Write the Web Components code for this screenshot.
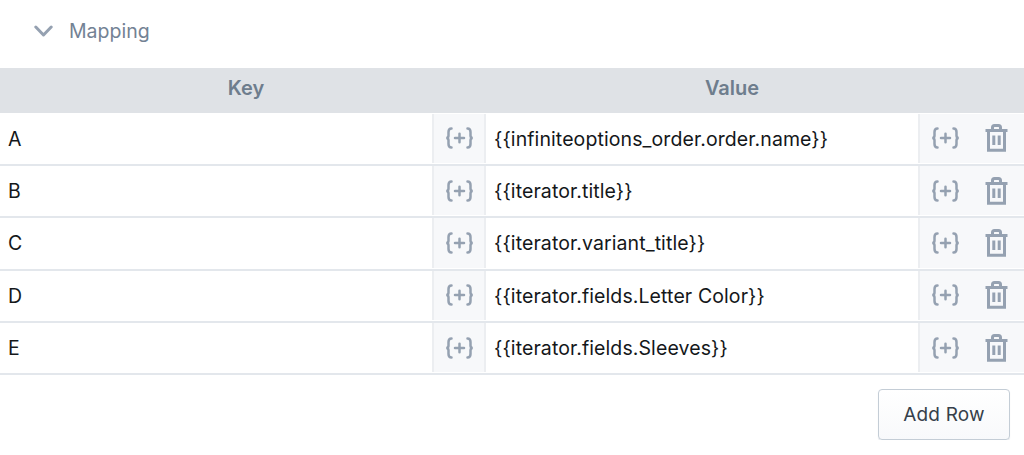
<!DOCTYPE html>
<html><head><meta charset="utf-8"><style>
html,body{margin:0;padding:0;background:#fff;font-family:Inter,"Liberation Sans",sans-serif}
</style></head><body>
<template id="t-row"><style>
:host{display:grid;grid-template-columns:432px 54px 432px 106px;height:52.4px;box-sizing:border-box;border-bottom:2px solid #e3e7ec;font-size:19.5px;color:#14171a;letter-spacing:.1px}
.cell{display:flex;align-items:center;padding-left:8px}
.add{display:flex;align-items:center;justify-content:center;background:#f7f8fa;border-left:2px solid #eceef1;border-right:2px solid #eceef1;margin-bottom:1px}
.acts{display:flex;align-items:center;background:#f7f8fa;border-left:2px solid #eceef1;padding-left:11px;gap:25px;margin-bottom:1px}
svg{display:block}
</style>
<div class="cell"><slot name="k"></slot></div>
<div class="add"><svg width="29" height="24" viewBox="0 0 29 22" fill="none" stroke="#95a1b1" stroke-width="2.500" stroke-linecap="round"><path d="M6.500 1.500C3.800 1.500 3.500 3 3.500 5v3.500C3.500 10 2.500 11 1.200 11c1.300 0 2.300 1 2.300 2.500V17c0 2 .3 3.500 3 3.500M22.500 1.500c2.700 0 3 1.500 3 3.500v3.500c0 1.500 1 2.500 2.300 2.500-1.300 0-2.300 1-2.300 2.500V17c0 2-.3 3.500-3 3.500M10 11h9M14.500 6.800v8.400"/></svg></div>
<div class="cell"><slot name="v"></slot></div>
<div class="acts"><svg width="29" height="24" viewBox="0 0 29 22" fill="none" stroke="#95a1b1" stroke-width="2.500" stroke-linecap="round"><path d="M6.500 1.500C3.800 1.500 3.500 3 3.500 5v3.500C3.500 10 2.500 11 1.200 11c1.300 0 2.300 1 2.300 2.500V17c0 2 .3 3.500 3 3.500M22.500 1.500c2.700 0 3 1.500 3 3.500v3.500c0 1.500 1 2.500 2.300 2.500-1.300 0-2.300 1-2.300 2.500V17c0 2-.3 3.500-3 3.500M10 11h9M14.500 6.800v8.400"/></svg>
<svg width="23" height="28" viewBox="0 0 23 28" fill="none" stroke="#95a1b1" stroke-width="3"><path d="M.5 6.500h22M7.500 6.500V3.500a2 2 0 0 1 2-2h4a2 2 0 0 1 2 2v3M3.500 6.500V26.300h16V6.500M8.800 11.500v9.500M14.200 11.500v9.500"/></svg></div>
</template>
<template id="t-map"><style>
:host{display:block}
.title{height:68px;display:flex;align-items:center;padding-left:34px;gap:16px;font-size:19.500px;color:#738294;box-sizing:border-box;padding-bottom:6px}
.head{height:45px;background:#dfe2e6;display:grid;grid-template-columns:486px 486px 52px;font-size:20px;font-weight:600;color:#6e7d8d;margin-bottom:.5px}
.head span{display:flex;align-items:center;justify-content:center;padding-left:6px;padding-bottom:6px}
.foot{display:flex;justify-content:flex-end;padding:14px 14px 0 0}
</style>
<div class="title"><svg width="19" height="12" viewBox="0 0 19 12" fill="none" stroke="#95a1b1" stroke-width="3" stroke-linecap="round" stroke-linejoin="round"><path d="M1.800 2l7.700 8 7.700-8"/></svg><span>Mapping</span></div>
<div class="head"><span>Key</span><span>Value</span><i></i></div>
<slot></slot>
<div class="foot"><slot name="foot"></slot></div>
</template>
<template id="t-btn"><style>
:host{display:inline-flex;align-items:center;justify-content:center;width:132px;height:51px;box-sizing:border-box;border:1.500px solid #c4cdd6;border-radius:4px;background:linear-gradient(#fff,#f8f9fb);box-shadow:0 1px 1px #e3e6ea;font-size:19px;color:#363f4a;letter-spacing:.2px}
</style><slot></slot></template>

<x-map>
<x-row><span slot="k">A</span><span slot="v">{{infiniteoptions_order.order.name}}</span></x-row>
<x-row><span slot="k">B</span><span slot="v">{{iterator.title}}</span></x-row>
<x-row><span slot="k">C</span><span slot="v">{{iterator.variant_title}}</span></x-row>
<x-row><span slot="k">D</span><span slot="v">{{iterator.fields.Letter Color}}</span></x-row>
<x-row><span slot="k">E</span><span slot="v">{{iterator.fields.Sleeves}}</span></x-row>
<x-btn slot="foot">Add Row</x-btn>
</x-map>
<script>
for(const [n,id] of [['x-row','t-row'],['x-map','t-map'],['x-btn','t-btn']]){
customElements.define(n,class extends HTMLElement{constructor(){super();this.attachShadow({mode:'open'}).appendChild(document.getElementById(id).content.cloneNode(true))}});
}
</script>
</body></html>
